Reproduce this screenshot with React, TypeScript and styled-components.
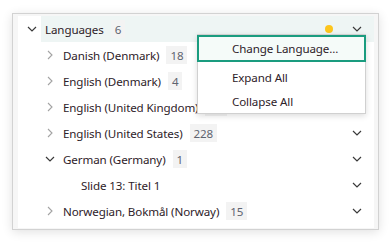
import React from "react";
import styled, { createGlobalStyle } from "styled-components";

const GlobalStyle = createGlobalStyle`
  html, body { margin: 0; padding: 0; background: #ffffff; }
  body { font-family: "Noto Sans", "Open Sans", sans-serif; }
`;

const Page = styled.div`
  width: 392px;
  height: 243px;
  padding: 13px 0 0 12px;
  box-sizing: border-box;
  position: relative;
`;

const Panel = styled.div`
  width: 367px;
  height: 217px;
  box-sizing: border-box;
  border: 1px solid #d2d2d2;
  background: #f6f6f6;
  padding: 2px 4px 1px 5px;
  box-shadow: 0 2px 10px rgba(0, 0, 0, 0.12);
`;

const Tree = styled.div`
  background: #ffffff;
  height: 100%;
  overflow: hidden;
  display: flex;
  flex-direction: column;
`;

const Row = styled.div<{ $level: number }>`
  display: flex;
  align-items: center;
  height: 26px;
  padding-left: ${(p) => 7 + p.$level * 18}px;
  flex-shrink: 0;
`;

const Toggle = styled.span`
  width: 14px;
  height: 26px;
  display: flex;
  align-items: center;
  justify-content: center;
  margin-right: 2px;
`;

const Content = styled.div<{ $selected?: boolean }>`
  flex: 1;
  height: 26px;
  display: flex;
  align-items: center;
  padding: 0 12px 0 4px;
  background: ${(p) => (p.$selected ? "#eef5f4" : "transparent")};
`;

const Label = styled.span`
  font-size: 11.6px;
  letter-spacing: -0.12px;
  color: #2e2229;
  white-space: nowrap;
`;

const Badge = styled.span`
  margin-left: 7px;
  height: 18px;
  padding: 0 4px;
  display: inline-flex;
  align-items: center;
  background: #f3f3f3;
  color: #5f6470;
  font-size: 11.6px;
  letter-spacing: -0.12px;
`;

const Spacer = styled.span`
  flex: 1;
`;

const Dot = styled.span`
  width: 8px;
  height: 8px;
  border-radius: 50%;
  background: #fdc51c;
  margin-right: 19px;
`;

const Chevron = styled.svg`
  width: 10px;
  height: 6px;
  display: block;
`;

const Menu = styled.div`
  position: absolute;
  left: 197px;
  top: 34px;
  width: 169px;
  height: 80px;
  box-sizing: border-box;
  background: #ffffff;
  border: 1px solid #d0d0d0;
  box-shadow: 0 2px 6px rgba(0, 0, 0, 0.14);
  display: flex;
  flex-direction: column;
`;

const MenuItem = styled.div<{ $focused?: boolean }>`
  height: ${(p) => (p.$focused ? 27 : 24)}px;
  box-sizing: border-box;
  display: flex;
  align-items: center;
  padding-left: ${(p) => (p.$focused ? 33 : 34)}px;
  font-size: 11.6px;
  letter-spacing: -0.12px;
  color: #2e2229;
  border: ${(p) => (p.$focused ? "2px solid #1a9c7f" : "none")};
  background: ${(p) => (p.$focused ? "#f5fbf9" : "transparent")};
  margin: ${(p) => (p.$focused ? "0 0 3px -1px" : "0")};
  width: ${(p) => (p.$focused ? "169px" : "auto")};
`;

function ChevronRight() {
  return (
    <svg width="6" height="10" viewBox="0 0 6 10">
      <path d="M1 1 L5 5 L1 9" fill="none" stroke="#a3a3a3" strokeWidth="1.1" />
    </svg>
  );
}

function ChevronDown({ color = "#3a3a3a" }: { color?: string }) {
  return (
    <Chevron viewBox="0 0 10 6">
      <path d="M1 1 L5 5 L9 1" fill="none" stroke={color} strokeWidth="1.2" />
    </Chevron>
  );
}

type Node = {
  label: string;
  level: number;
  count?: number;
  toggle?: "open" | "closed";
  selected?: boolean;
  dot?: boolean;
  more?: boolean;
};

const nodes: Node[] = [
  { label: "Languages", level: 0, count: 6, toggle: "open", selected: true, dot: true, more: true },
  { label: "Danish (Denmark)", level: 1, count: 18, toggle: "closed", more: true },
  { label: "English (Denmark)", level: 1, count: 4, toggle: "closed", more: true },
  { label: "English (United Kingdom)", level: 1, count: 33, toggle: "closed", more: true },
  { label: "English (United States)", level: 1, count: 228, toggle: "closed", more: true },
  { label: "German (Germany)", level: 1, count: 1, toggle: "open", more: true },
  { label: "Slide 13: Titel 1", level: 2, more: true },
  { label: "Norwegian, Bokmål (Norway)", level: 1, count: 15, toggle: "closed", more: true },
];

export default function App() {
  return (
    <>
      <GlobalStyle />
      <Page>
        <Panel>
          <Tree>
            {nodes.map((n) => (
              <Row key={n.label} $level={n.level}>
                <Toggle>
                  {n.toggle === "open" && <ChevronDown color="#3a3a3a" />}
                  {n.toggle === "closed" && <ChevronRight />}
                </Toggle>
                <Content $selected={n.selected}>
                  <Label>{n.label}</Label>
                  {n.count !== undefined && <Badge>{n.count}</Badge>}
                  <Spacer />
                  {n.dot && <Dot />}
                  {n.more && <ChevronDown />}
                </Content>
              </Row>
            ))}
          </Tree>
        </Panel>
        <Menu>
          <MenuItem $focused>Change Language...</MenuItem>
          <MenuItem>Expand All</MenuItem>
          <MenuItem>Collapse All</MenuItem>
        </Menu>
      </Page>
    </>
  );
}
